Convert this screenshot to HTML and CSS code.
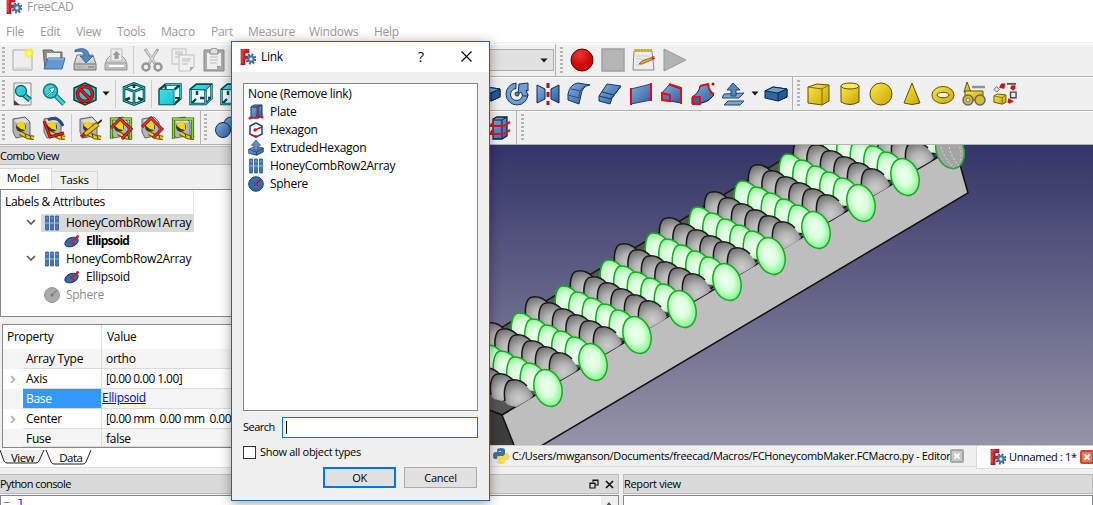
FILE: index.html
```html
<!DOCTYPE html>
<html lang="en">
<head>
<meta charset="utf-8">
<title>FreeCAD</title>
<link rel="stylesheet" href="styles.css">
</head>
<body>
<svg class="defs" width="0" height="0">
<defs>
<linearGradient id="blue" x1="0" y1="0" x2="1" y2="1"><stop offset="0" stop-color="#82b0e2"/><stop offset="1" stop-color="#2c5c9f"/></linearGradient>
<linearGradient id="yellow" x1="0" y1="0" x2="1" y2="1"><stop offset="0" stop-color="#fbe84f"/><stop offset="1" stop-color="#caa400"/></linearGradient>
<linearGradient id="metal" x1="0" y1="0" x2="0" y2="1"><stop offset="0" stop-color="#e8e8e8"/><stop offset="1" stop-color="#b4b4b4"/></linearGradient>
<linearGradient id="cyan" x1="0" y1="0" x2="1" y2="1"><stop offset="0" stop-color="#45dfe6"/><stop offset="1" stop-color="#16c2cd"/></linearGradient>
<radialGradient id="red" cx=".4" cy=".25"><stop offset="0" stop-color="#f03434"/><stop offset="1" stop-color="#c90808"/></radialGradient>
<radialGradient id="glow" cx=".5" cy=".5"><stop offset="0" stop-color="#fffde0"/><stop offset=".45" stop-color="#fff02a"/><stop offset="1" stop-color="#fff02a" stop-opacity="0"/></radialGradient>
<linearGradient id="sky" x1="0" y1="0" x2="0" y2="1"><stop offset="0" stop-color="#343467"/><stop offset="1" stop-color="#9494a9"/></linearGradient>
<radialGradient id="greenBall" cx=".48" cy=".45" r=".56"><stop offset="0" stop-color="#efffef"/><stop offset=".5" stop-color="#d9ffdb"/><stop offset="1" stop-color="#7cf588"/></radialGradient>
<radialGradient id="greenTop" cx=".42" cy=".55" r=".6"><stop offset="0" stop-color="#efffef"/><stop offset=".5" stop-color="#d4fdd6"/><stop offset="1" stop-color="#80f08a"/></radialGradient>
<radialGradient id="greyBall" cx=".5" cy=".7" r=".75"><stop offset="0" stop-color="#cdcdcd"/><stop offset=".4" stop-color="#b4b4b4"/><stop offset="1" stop-color="#6a6a6a"/></radialGradient>
<symbol id="app" viewBox="0 0 16 16"><path d="M1 0h8v4H5v3h3v3H5v6H1z" fill="#d01c24" stroke="#7d1016" stroke-width=".6"/><path d="M5 1H2v13" fill="none" stroke="#f45a60"/><circle cx="11" cy="10" r="4.300" fill="none" stroke="#3d6193" stroke-width="2.600" stroke-dasharray="1.800 1.570"/><circle cx="11" cy="10" r="2.700" fill="#dce7f5" stroke="#4670a8" stroke-width="2"/></symbol>
<symbol id="new" viewBox="0 0 24 24"><path d="M2 2h19v20H2z" fill="#eee" stroke="#aaa"/><path d="M4 20h15" stroke="#ccc"/><circle cx="18" cy="5" r="6" fill="url(#glow)"/></symbol>
<symbol id="open" viewBox="0 0 24 24"><path d="M1 2h9l2 2h8v7H5L3 21z" fill="#8d8d8d" stroke="#666"/><path d="M5 5h13v8H5z" fill="#eee"/><path d="M6 10h17l-3 11H2z" fill="#6599d4" stroke="#3e70ae"/><path d="M6 11h16" stroke="#a8c8eb"/></symbol>
<symbol id="save" viewBox="0 0 24 24"><path d="M4 7h16l3 9v6H1v-6z" fill="url(#metal)" stroke="#777"/><path d="M2 16h20M15 19h6" stroke="#777"/><path d="M4 19h6" stroke="#888" stroke-dasharray="1 1"/><path d="M2 2c8-3 14-1 14 6h4l-7 7-6-7h4c0-4-3-6-9-4z" fill="#5587c7" stroke="#315c94" stroke-width=".8"/></symbol>
<symbol id="print" viewBox="0 0 24 24"><path d="M3 11l3-3h12l3 3 2 5v6H1v-6z" fill="url(#metal)" stroke="#999"/><path d="M7 1h11v12H7z" fill="#eee" stroke="#bbb"/><path d="M12.500 3l4 4h-2v4h-4V7h-2z" fill="#999"/><path d="M2 15h20" stroke="#999"/><path d="M5 18h15" stroke="#fafafa" stroke-width="2"/></symbol>
<symbol id="cut" viewBox="0 0 24 24"><path d="M5 1l11 16M18 1L8 17" stroke="#aaa" stroke-width="3"/><path d="M6 2l9 13M17 3L9 15" stroke="#eee"/><circle cx="6" cy="19" r="3.500" fill="none" stroke="#999" stroke-width="2.500"/><circle cx="18" cy="19" r="3.500" fill="none" stroke="#999" stroke-width="2.500"/></symbol>
<symbol id="copy" viewBox="0 0 24 24"><g fill="#f0f0f0" stroke="#c0c0c0"><path d="M1 1h14v15H1z"/><path d="M8 7h15v12l-4 4H8z"/></g><path d="M4 4h8M4 6h8M4 9h4M11 11h9M11 13h8M11 16h6" stroke="#bbb"/><path d="M19 23v-4h4z" fill="#aaa"/></symbol>
<symbol id="paste" viewBox="0 0 24 24"><path d="M2 2h20v21H2z" fill="#aaa" stroke="#888"/><path d="M5 5h14v13l-4 3H5z" fill="#efefef"/><path d="M8 2q4-4 8 0v4H8z" fill="#ddd" stroke="#888"/><path d="M8 9h8M8 12h8M8 15h7" stroke="#bbb"/><path d="M15 21v-3h4z" fill="#999"/></symbol>
<symbol id="fit" viewBox="0 0 24 24"><path d="M3 1h17v22H3z" fill="#f2f2f2" stroke="#8b8b8b"/><path d="M3 18l6 5H3z" fill="#444"/><path d="M13 13l6 5" stroke="#085d66" stroke-width="5"/><path d="M13 13l6 5" stroke="#38cbd6" stroke-width="2.500"/><circle cx="10" cy="9" r="5.500" fill="url(#cyan)" stroke="#085d66" stroke-width="1.300"/></symbol>
<symbol id="fitsel" viewBox="0 0 24 24"><path d="M14 14l8 8" stroke="#0c6b74" stroke-width="5"/><path d="M13 13l9 9" stroke="#3ad3dc" stroke-width="3"/><circle cx="8.500" cy="9" r="7" fill="url(#cyan)" stroke="#16747c" stroke-width="1.500"/><path d="M5 13l4-4-2-2 6-2-2 6-1-1-4 4" fill="#e5ffff" stroke="#085d66" stroke-width=".6"/></symbol>
<symbol id="style" viewBox="0 0 24 24"><path d="M12 1l11 5v12l-11 5L1 18V6z" fill="#20cad5" stroke="#063f46" stroke-width="1.500"/><circle cx="12" cy="12" r="7.500" fill="none" stroke="#7d0505" stroke-width="3.600"/><circle cx="12" cy="12" r="7.500" fill="none" stroke="#e31919" stroke-width="2"/><path d="M7 7l10 10" stroke="#7d0505" stroke-width="3.600"/><path d="M7 7l10 10" stroke="#e31919" stroke-width="2"/></symbol>
<symbol id="iso" viewBox="0 0 24 24"><path d="M12 1.500l10 4v13l-10 4-10-4v-13z" fill="#e9f7f7"/><g fill="none"><path d="M12 1.500l10 4v13l-10 4-10-4v-13zM2 5.500l10 4 10-4M12 9.500v13M2 18.500l6-2.500m14 2.500l-6-2.500M12 2v4" stroke="#053e43" stroke-width="2.600"/><path d="M12 1.500l10 4v13l-10 4-10-4v-13zM2 5.500l10 4 10-4M12 9.500v13" stroke="#2cc4cd"/></g></symbol>
<symbol id="front" viewBox="0 0 24 24"><path d="M1.500 7.500l6-5h15v14l-6 5.500h-15zM16.500 7.500l6-5" fill="#dff" stroke="#06484e" stroke-width="2.400"/><path d="M7.500 2.500v5M17 16h5" stroke="#06484e" stroke-width="2"/><path d="M1.500 7.500h14.500v15H1.500z" fill="url(#cyan)" stroke="#0a7d86"/><path d="M7.500 2.500h15v14" fill="none" stroke="#2cc4cd"/></symbol>
<symbol id="top" viewBox="0 0 24 24"><path d="M1.500 7.500l6-5h15v14l-6 5.500h-15zM16.500 7.500v15M2 22l5-5m4-1h4m4 0h3M8 9v4" fill="#eefafa" stroke="#06484e" stroke-width="2.400"/><path d="M1.500 8v14h15V8m6-5v14l-6 5" fill="none" stroke="#2cc4cd"/><path d="M1.500 7.500l6-5h15l-6 5.500z" fill="url(#cyan)" stroke="#06484e"/></symbol>
<symbol id="tape" viewBox="0 0 24 24"><path d="M2 3l12-2 5 5v13L5 22l-3-6z" fill="#b5b5b5" stroke="#666"/><path d="M3 4l11-2 4 4-11 2z" fill="#ddd"/><circle cx="10" cy="11" r="5" fill="#3a3a3a"/><path d="M6 10a4 4 0 0 1 8-1v5l-4-1z" fill="#f4d414"/><path d="M9 17l8 4 6 1" stroke="#6c5500" stroke-width="4.500" fill="none"/><path d="M9 17l8 4 6 1" stroke="#eccc15" stroke-width="2.500" fill="none"/><path d="M14 18l1 3M19 20l1 3" stroke="#333"/></symbol>
<symbol id="tapeAngle" viewBox="0 0 24 24"><use href="#tape"/><path d="M2 5l6 16 14-4" fill="none" stroke="#7d0000" stroke-width="3"/><path d="M2 5l6 16 14-4" fill="none" stroke="#e42424" stroke-width="1.500"/><path d="M6 4q10-5 15 6" fill="none" stroke="#234f87" stroke-width="3"/></symbol>
<symbol id="tapePen" viewBox="0 0 24 24"><use href="#tape"/><path d="M6 19L20 8" stroke="#705900" stroke-width="5"/><path d="M6 19L20 8" stroke="#edc11e" stroke-width="3"/><path d="M3 21l4-3" stroke="#b92222" stroke-width="4"/><path d="M19 8l5-4" stroke="#333" stroke-width="2"/></symbol>
<symbol id="tapeGreen" viewBox="0 0 24 24"><use href="#tape"/><path d="M2.500 23V3h19v20" fill="none" stroke="#275e06" stroke-width="3.200"/><path d="M2.500 23V3h19v20" fill="none" stroke="#86d32d" stroke-width="1.800"/></symbol>
<symbol id="tapeRed" viewBox="0 0 24 24"><use href="#tape"/><path d="M2 11l9-9 11 11-9 9" fill="none" stroke="#780909" stroke-width="3"/><path d="M2 11l9-9 11 11-9 9" fill="none" stroke="#ef3232" stroke-width="1.600"/></symbol>
<symbol id="tapeAll" viewBox="0 0 24 24"><use href="#tapeGreen"/><path d="M2 12l9-9 11 10-9 10" fill="none" stroke="#780909" stroke-width="3"/><path d="M2 12l9-9 11 10-9 10" fill="none" stroke="#ef3232" stroke-width="1.600"/></symbol>
<symbol id="balls" viewBox="0 0 24 24"><circle cx="18" cy="8" r="7" fill="url(#blue)" stroke="#132d52"/><circle cx="10" cy="14" r="7.500" fill="url(#blue)" stroke="#132d52"/></symbol>
<symbol id="record" viewBox="0 0 24 24"><circle cx="12" cy="12" r="11" fill="url(#red)" stroke="#5e0000"/></symbol>
<symbol id="stop" viewBox="0 0 24 24"><path d="M1 1h22v22H1z" fill="#b5b5b5" stroke="#a0a0a0" stroke-width="1.500"/></symbol>
<symbol id="macro" viewBox="0 0 24 24"><path d="M2 3h18l2 19H1z" fill="#eee" stroke="#888"/><path d="M2 1h18v3H2z" fill="#dcc62f"/><path d="M4 1v3M7 1v3M10 1v3M13 1v3M16 1v3M19 1v3" stroke="#a8962a"/><path d="M4 8h14M4 11h12M4 14h6M4 17h5" stroke="#ccc"/><path d="M7 16l3-3L21 9l1 2-12 5z" fill="#efa83e" stroke="#81511b" stroke-width=".8"/><path d="M19 9l3-1 1 3-3 1z" fill="#bf4442"/></symbol>
<symbol id="play" viewBox="0 0 24 24"><path d="M1 1l22 11L1 23z" fill="#b3b3b3" stroke="#999"/></symbol>
<symbol id="box" viewBox="0 0 24 24"><path d="M1 9l8-4 14 2v8l-9 4-13-3z" fill="#3465a4" stroke="#0c2548"/><path d="M1 9l8-4 14 2-9 4z" fill="#729fcf" stroke="#0c2548"/><path d="M14 11v8l9-4V7z" fill="#2b5896" stroke="#0c2548"/></symbol>
<symbol id="extrude" viewBox="0 0 24 24"><path d="M1 14l10-5 12 3v6l-10 5-12-3z" fill="url(#blue)" stroke="#132d52"/><path d="M1 14l12 4 10-6M13 18v5" fill="none" stroke="#132d52"/><path d="M9 15V8H5l7-8 7 8h-4v7z" fill="#6491c5" stroke="#344f73"/></symbol>
<symbol id="revolve" viewBox="0 0 24 24"><path d="M11 1A11 11 0 1 0 23 12h-5.500A6 6 0 1 1 11 6.500z" fill="#6c9dd4" stroke="#1c3557"/><path d="M14 2l9-1v8l-2-1 2 6h-5l-2-4-3 2z" fill="#6c9dd4" stroke="#1c3557"/><circle cx="12" cy="12" r="2" fill="#5a87b9" stroke="#1c3557"/></symbol>
<symbol id="mirror" viewBox="0 0 24 24"><path d="M1 3l8 4v10l-8 4zM23 3l-8 4v10l8 4z" fill="url(#blue)" stroke="#102744"/><path d="M12 1v22" stroke="#b70f18" stroke-width="3" stroke-dasharray="5 4"/></symbol>
<symbol id="fillet" viewBox="0 0 24 24"><path d="M1 12Q3 2 11 1l12 2q-8 1-9 10l-2 9-11-4z" fill="url(#blue)" stroke="#17355e"/><path d="M1 13l11 3Q12 7 18 4M4 7l10 2" fill="none" stroke="#274f85"/></symbol>
<symbol id="chamfer" viewBox="0 0 24 24"><path d="M1 14L9 2l14 2-9 12-2 6-11-3z" fill="url(#blue)" stroke="#17355e"/><path d="M1 14l12 3L23 4M4 10l12 3" fill="none" stroke="#17355e"/></symbol>
<symbol id="ruled" viewBox="0 0 24 24"><path d="M2 7l20-5v16L2 22z" fill="url(#blue)" stroke="#29466c"/><path d="M2 6v17M22 1v18" stroke="#d90c18" stroke-width="2"/></symbol>
<symbol id="loft" viewBox="0 0 24 24"><path d="M2 11L9 3l12 4v14L10 19l-8-1z" fill="url(#blue)" stroke="#17355e"/><path d="M9 2l12 4v16" fill="none" stroke="#df101b" stroke-width="2"/><path d="M2 11l8 2v6l-8-1z" fill="#4b7cba" stroke="#df101b" stroke-width="2"/></symbol>
<symbol id="sweep" viewBox="0 0 24 24"><path d="M1 15Q8 11 9 4l8-2q1 9 6 11-5 7-12 8L1 22z" fill="url(#blue)" stroke="#111f36"/><path d="M9 4l8-2q1 8 6 10" fill="none" stroke="#df101b" stroke-width="2"/><path d="M2 15h7v7H2z" fill="#3d629a" stroke="#df101b" stroke-width="2"/><circle cx="22" cy="2" r="1.500" fill="#b00"/></symbol>
<symbol id="offset" viewBox="0 0 24 24"><path d="M2 12l20-1-5 5H0zM6 19h16l-4 4H2z" fill="#79a5d8" stroke="#24466f"/><path d="M9 14V8H5l6-7 7 7h-4v6z" fill="#5786bd" stroke="#24466f"/></symbol>
<symbol id="section" viewBox="0 0 24 24"><path d="M5 3l4-2h10v19l-5 3H5z" fill="url(#blue)" stroke="#10233e" stroke-width="1.300"/><path d="M5 4h9v19M14 4l5-3" fill="none" stroke="#10233e"/><path d="M5 7l-3 3h14l6-4M5 14l-3 4h14l6-4" fill="none" stroke="#d71722" stroke-width="2.200"/></symbol>
<symbol id="ycube" viewBox="0 0 24 24"><path d="M1 5l9-3 12 1v16l-7 4-14-2z" fill="url(#yellow)" stroke="#5f4f00"/><path d="M1 5l14 2v16M15 7l7-4" fill="none" stroke="#806b00"/></symbol>
<symbol id="ycyl" viewBox="0 0 24 24"><path d="M3 4v16q9 5 18 0V4" fill="url(#yellow)" stroke="#5f4f00"/><ellipse cx="12" cy="4" rx="9" ry="3" fill="#fbe957" stroke="#5f4f00"/></symbol>
<symbol id="ysphere" viewBox="0 0 24 24"><circle cx="12" cy="12" r="11" fill="url(#yellow)" stroke="#5f4f00"/></symbol>
<symbol id="ycone" viewBox="0 0 24 24"><path d="M12 1l8 20q-8 3-16 0z" fill="url(#yellow)" stroke="#5f4f00"/></symbol>
<symbol id="torus" viewBox="0 0 24 24"><path fill-rule="evenodd" d="M1 13a11 8.500 0 0 1 22 0a11 8.500 0 0 1-22 0m5 0a6 2.700 0 0 0 12 0a6 2.700 0 0 0-12 0" fill="url(#yellow)" stroke="#665300"/></symbol>
<symbol id="prims" viewBox="0 0 24 24"><path d="M5 0l4 10H2z" fill="url(#yellow)" stroke="#665300"/><path d="M3 9h18v9H3z" fill="url(#yellow)" stroke="#665300"/><path d="M10 5h13" stroke="#8a9292" stroke-width="2.500"/><g fill="#d8bd28" stroke="#666" stroke-width="1.500"><circle cx="6" cy="18" r="5"/><circle cx="18" cy="18" r="5"/></g><circle cx="6" cy="18" r="2" fill="#ddd" stroke="#777"/></symbol>
<symbol id="shape" viewBox="0 0 26 24"><path d="M1 14l4-2 9 1v8l-4 2-9-2z" fill="url(#yellow)" stroke="#665300"/><path d="M1 14l9 2v7M10 16l4-3" fill="none" stroke="#806b00"/><path d="M1 7l3-3 3 3-3 3z" fill="#ddd" stroke="#666"/><path d="M15 1h10" stroke="#555" stroke-width="2"/><path d="M19 10h6v6h-6z" fill="#eee" stroke="#445" stroke-width="1.500"/><path d="M7 5l2-4 4 0-1 5zM20 3h4v3l-2 2-3-2zM16 21l1-4 5 3-4 2z" fill="#df1111" stroke="#750000" stroke-width=".5"/></symbol>
<symbol id="plate" viewBox="0 0 16 16"><path d="M3 3l3-2h8v11l-4 2H3z" fill="url(#blue)" stroke="#173457"/><path d="M3 3h7v11M10 3l4-2" fill="none" stroke="#173457"/><path d="M1 14h9l5-2M9 4v10" fill="none" stroke="#c91420"/><circle cx="2" cy="14" r="1.500" fill="#d21a25"/><circle cx="14" cy="13" r="1.500" fill="#d21a25"/></symbol>
<symbol id="hexagon" viewBox="0 0 16 16"><path d="M8 1l6 3v8l-6 3-6-3V4z" fill="#fff" stroke="#244d83" stroke-width="1.600"/><path d="M8 15l-6-3M7 8l7-3" fill="none" stroke="#c41926" stroke-width="1.500"/><circle cx="7" cy="8" r="1.700" fill="#c41926"/><circle cx="8" cy="14.500" r="1.300" fill="#c41926"/></symbol>
<symbol id="array" viewBox="0 0 16 16"><path d="M1.500 1h3v14h-3zM6.500 1h3v14h-3zM11.500 1h3v14h-3z" fill="#3b78be" stroke="#315d92" stroke-width=".8"/><path d="M0 8h16" stroke="#a9bfda"/><path d="M2 3h2M7 3h2M12 3h2" stroke="#7da8d8"/></symbol>
<symbol id="sphere" viewBox="0 0 16 16"><circle cx="8" cy="8" r="7.300" fill="#376aab" stroke="#193d6e"/><path d="M8 8l5-5" stroke="#b91722" stroke-width="1.500"/><circle cx="8" cy="8" r="1.500" fill="#c11723"/></symbol>
<symbol id="greySphere" viewBox="0 0 16 16"><circle cx="8" cy="8" r="7.500" fill="#aaa" stroke="#999"/><path d="M8 8l5-5" stroke="#888" stroke-width="1.500"/><circle cx="8" cy="8" r="1.500" fill="#777"/></symbol>
<symbol id="ellipsoid" viewBox="0 0 16 16"><ellipse cx="7.500" cy="9" rx="7" ry="4.300" transform="rotate(-24 7.500 9)" fill="#376aab" stroke="#163968"/><path d="M7 9l7-6M7 9l4 3" stroke="#cb1722" stroke-width="1.300"/><circle cx="7" cy="9" r="1.300" fill="#d41c26"/><circle cx="13.500" cy="3.500" r="1.500" fill="#c41c26"/></symbol>
<symbol id="python" viewBox="0 0 16 16"><path d="M4 4V2q0-2 4-2t4 2v4q0 2-2 2H6q-2 0-2 3H2q-2 0-2-3.500T3 4h5V3z" fill="#3873a4"/><path d="M12 12v2q0 2-4 2t-4-2v-4q0-2 2-2h4q2 0 2-3h2q2 0 2 3.500T13 12H8v1z" fill="#ffd653"/></symbol>
<symbol id="arrow" viewBox="0 0 8 5"><path d="M.5.5h7L4 4.500z" fill="#111"/></symbol>
<symbol id="closeTab" viewBox="0 0 14 14"><rect x="1" y="1" width="12" height="12" rx="1" fill="#c8c8c8" stroke="#a7a7a7" stroke-width="2"/><path d="M4.500 4.500l5 5m0-5l-5 5" stroke="#fff" stroke-width="2"/></symbol>
<symbol id="closeRed" viewBox="0 0 14 14"><rect x="1" y="1" width="12" height="12" rx="1" fill="#e27b64" stroke="#cc4a2c" stroke-width="2"/><path d="M4.500 4.500l5 5m0-5l-5 5" stroke="#fff" stroke-width="2"/></symbol>
<g id="greenDome"><path d="M-14 0C-15-10-12-19-6-19C4-19 13-7 14 3L8 10L-8 8Z" fill="url(#greenTop)"/><path d="M-13 5C-15-6-13-19-6-19C0-19 5-16 9-10" fill="none" stroke="#18aa25" stroke-width="1.500"/></g>
<g id="greyDome"><path d="M-12 9C-14-4-11-13-6-13C5-15 13-4 16 3L13 6L-1 14L-9 12Z" fill="url(#greyBall)"/><path d="M-12 8C-14-4-11-13-5-13C2-14 6-11 10-7" fill="none" stroke="#171717" stroke-width="1.500"/></g>
<g id="greenRow"><use href="#greenDome" x="-68" y="-30"/><use href="#greenDome" x="-54.500" y="-24"/><use href="#greenDome" x="-41" y="-18"/><use href="#greenDome" x="-27.500" y="-12"/><use href="#greenDome" x="-14" y="-6"/><ellipse rx="13.600" ry="18.900" transform="rotate(-18)" fill="url(#greenBall)" stroke="#19aa25" stroke-width="1.500"/></g>
<g id="greyRow"><use href="#greyDome" x="-68" y="-30"/><use href="#greyDome" x="-54.500" y="-24"/><use href="#greyDome" x="-41" y="-18"/><use href="#greyDome" x="-27.500" y="-12"/><use href="#greyDome" x="-14" y="-6"/><use href="#greyDome"/></g>
</defs>
</svg>

<div class="app">
  <header class="titlebar"><svg class="i16"><use href="#app"/></svg><span>FreeCAD</span></header>
  <nav class="menubar"><span class="m1">File</span><span class="m2">Edit</span><span class="m3">View</span><span class="m4">Tools</span><span class="m5">Macro</span><span class="m6">Part</span><span class="m7">Measure</span><span class="m8">Windows</span><span>Help</span></nav>

  <div class="toolbar">
    <div class="half"><i class="grip"></i><b><svg><use href="#new"/></svg></b><b><svg><use href="#open"/></svg></b><b><svg><use href="#save"/></svg></b><b><svg><use href="#print"/></svg></b><i class="sep"></i><b><svg><use href="#cut"/></svg></b><b><svg><use href="#copy"/></svg></b><b><svg><use href="#paste"/></svg></b></div>
    <div class="rest"><div class="combo"><svg class="arrow"><use href="#arrow"/></svg></div><i class="edge"></i><i class="grip"></i><b><svg><use href="#record"/></svg></b><b><svg><use href="#stop"/></svg></b><b><svg><use href="#macro"/></svg></b><b><svg><use href="#play"/></svg></b></div>
  </div>
  <div class="toolbar">
    <div class="half"><i class="grip"></i><b><svg><use href="#fit"/></svg></b><b><svg><use href="#fitsel"/></svg></b><b><svg><use href="#style"/></svg></b><svg class="arrow"><use href="#arrow"/></svg><i class="sep wide"></i><b><svg><use href="#iso"/></svg></b><i class="sep"></i><b><svg><use href="#front"/></svg></b><b><svg><use href="#top"/></svg></b><b><svg><use href="#top"/></svg></b></div>
    <div class="rest"><b class="partial"><svg><use href="#box"/></svg></b><b><svg><use href="#revolve"/></svg></b><b><svg><use href="#mirror"/></svg></b><b><svg><use href="#fillet"/></svg></b><b><svg><use href="#chamfer"/></svg></b><b><svg><use href="#ruled"/></svg></b><b><svg><use href="#loft"/></svg></b><b><svg><use href="#sweep"/></svg></b><b><svg><use href="#offset"/></svg></b><svg class="arrow"><use href="#arrow"/></svg><b><svg><use href="#box"/></svg></b><i class="edge"></i><i class="grip"></i><b><svg><use href="#ycube"/></svg></b><b><svg><use href="#ycyl"/></svg></b><b><svg><use href="#ysphere"/></svg></b><b><svg><use href="#ycone"/></svg></b><b><svg><use href="#torus"/></svg></b><b><svg><use href="#prims"/></svg></b><b><svg><use href="#shape"/></svg></b></div>
  </div>
  <div class="toolbar">
    <div class="half"><i class="grip"></i><b><svg><use href="#tape"/></svg></b><b><svg><use href="#tapeAngle"/></svg></b><i class="sep"></i><b><svg><use href="#tapePen"/></svg></b><b><svg><use href="#tapeAll"/></svg></b><b><svg><use href="#tapeRed"/></svg></b><b><svg><use href="#tapeGreen"/></svg></b><i class="edge"></i><i class="grip"></i><b><svg><use href="#balls"/></svg></b></div>
    <div class="rest"><b class="section"><svg><use href="#section"/></svg></b><i class="edge"></i><i class="grip"></i></div>
  </div>

  <main class="work">
    <aside class="side">
      <h2 class="dock">Combo View</h2>
      <div class="tabs"><span class="tab on">Model</span><span class="tab">Tasks</span></div>
      <div class="tree">
        <div class="thead">Labels &amp; Attributes</div>
        <div class="node"><svg class="chev" viewBox="0 0 10 6"><path d="M1 1l4 4 4-4"/></svg><span class="label picked"><svg class="i16"><use href="#array"/></svg><em>HoneyCombRow1Array</em></span></div>
        <div class="node child"><svg class="i16"><use href="#ellipsoid"/></svg><em class="strong">Ellipsoid</em></div>
        <div class="node"><svg class="chev" viewBox="0 0 10 6"><path d="M1 1l4 4 4-4"/></svg><span class="label"><svg class="i16"><use href="#array"/></svg><em>HoneyCombRow2Array</em></span></div>
        <div class="node child"><svg class="i16"><use href="#ellipsoid"/></svg><em>Ellipsoid</em></div>
        <div class="node leaf"><svg class="i16"><use href="#greySphere"/></svg><em>Sphere</em></div>
      </div>
      <div class="props">
        <div class="prow phead"><span class="key">Property</span><span class="val">Value</span></div>
        <div class="prow alt"><i></i><span class="key">Array Type</span><span class="val">ortho</span></div>
        <div class="prow"><i><svg class="rchev" viewBox="0 0 6 9"><path d="M1 1l3.500 3.500L1 8"/></svg></i><span class="key">Axis</span><span class="val num">[0.00 0.00 1.00]</span></div>
        <div class="prow alt"><i></i><span class="key current">Base</span><span class="val link">Ellipsoid</span></div>
        <div class="prow"><i><svg class="rchev" viewBox="0 0 6 9"><path d="M1 1l3.500 3.500L1 8"/></svg></i><span class="key">Center</span><span class="val num">[0.00 mm&nbsp; 0.00 mm&nbsp; 0.00 mm]</span></div>
        <div class="prow alt last"><i></i><span class="key">Fuse</span><span class="val">false</span></div>
      </div>
      <div class="vtabs">
        <svg class="vshape" width="96" height="18"><path d="M0 0l4 11q1 2 3 2h29q2 0 3-2l5-11" fill="#f0f0f0" stroke="#222"/><path d="M46 0l5 12q1 2 3 2h29q2 0 3-2l5-12" fill="#fff" stroke="#222"/></svg>
        <span>View</span><span>Data</span>
      </div>
    </aside>
    <section class="stage">
      <svg class="scene" viewBox="489 145 604 300" width="604" height="300">
        <rect x="489" y="145" width="604" height="300" fill="url(#sky)"/>
        <path d="M489 335L822 136h140L502 415l-13-5z" fill="#555" stroke="#161616" stroke-width="1.500"/>
        <path d="M502 415L955 147l13 46L541 445h-27z" fill="#bebebe"/>
        <path d="M489 410l13 5 12 31h-25z" fill="#3d3d3d"/>
        <path d="M489 410l13 5 12 30M502 415L955 147l13 46L541 446" fill="none" stroke="#111" stroke-width="1.500"/>
        <use href="#greyRow" x="963" y="129"/><use href="#greenRow" x="950" y="150"/>
        <ellipse cx="950" cy="150" rx="13.600" ry="18.900" transform="rotate(-18 950 150)" fill="#a4a4a4" stroke="#26a631" stroke-width="1.300"/>
        <path d="M940 143q2 13 14 25M949 143q0 12 10 23M958 143q5 10 2 20" fill="none" stroke="#baf2bd" stroke-dasharray="2 2"/>
        <use href="#greyRow" x="918" y="155"/><use href="#greenRow" x="905" y="177"/>
        <use href="#greyRow" x="874" y="182"/><use href="#greenRow" x="861" y="203"/>
        <use href="#greyRow" x="829" y="208"/><use href="#greenRow" x="816" y="230"/>
        <use href="#greyRow" x="785" y="235"/><use href="#greenRow" x="771" y="256"/>
        <use href="#greyRow" x="740" y="261"/><use href="#greenRow" x="727" y="282"/>
        <use href="#greyRow" x="695" y="287"/><use href="#greenRow" x="682" y="309"/>
        <use href="#greyRow" x="651" y="314"/><use href="#greenRow" x="637" y="335"/>
        <use href="#greyRow" x="606" y="340"/><use href="#greenRow" x="593" y="362"/>
        <use href="#greyRow" x="562" y="366"/><use href="#greenRow" x="548" y="388"/>
        <use href="#greyRow" x="517" y="393"/>
      </svg>
      <div class="mdi"><div class="doc"><svg class="i16"><use href="#python"/></svg><span class="path">C:/Users/mwganson/Documents/freecad/Macros/FCHoneycombMaker.FCMacro.py - Editor</span><svg class="i14"><use href="#closeTab"/></svg></div><div class="doc active"><svg class="i16"><use href="#app"/></svg><span class="unnamed">Unnamed : 1*</span><svg class="i14"><use href="#closeRed"/></svg></div></div>
    </section>
  </main>
  <footer class="bottom">
    <section class="console"><h2 class="dock"><span>Python console</span><svg width="30" height="12" viewBox="0 0 30 12"><path d="M5 4V2h5v5H7M2 5h5v5H2zM2 5.500h5M5 2.500h5" fill="none" stroke="#111" stroke-width="1.200"/><path d="M18 3l7 7m0-7l-7 7" stroke="#111" stroke-width="1.700"/></svg></h2><div class="pane"><code><span>=</span> ]</code><div class="scroll"><svg viewBox="0 0 8 5" width="8" height="5"><path d="M0 5l4-5 4 5z" fill="#555"/></svg></div></div></section>
    <section class="report"><h2 class="dock">Report view</h2><div class="pane"></div></section>
  </footer>
</div>

<div class="dialog" role="dialog">
  <div class="dtitle"><svg class="i16"><use href="#app"/></svg><span>Link</span><span class="help">?</span><svg class="x" viewBox="0 0 11 11"><path d="M.5.5l10 10m0-10l-10 10"/></svg></div>
  <div class="dbody">
    <ul class="list"><li class="none">None (Remove link)</li><li><svg class="i16"><use href="#plate"/></svg>Plate</li><li><svg class="i16"><use href="#hexagon"/></svg>Hexagon</li><li><svg class="i16"><use href="#extrude"/></svg>ExtrudedHexagon</li><li><svg class="i16"><use href="#array"/></svg>HoneyCombRow2Array</li><li><svg class="i16"><use href="#sphere"/></svg>Sphere</li></ul>
    <label class="search"><span>Search</span><span class="field"></span></label>
    <label class="check"><i></i><span>Show all object types</span></label>
    <div class="buttons"><span class="btn ok">OK</span><span class="btn">Cancel</span></div>
  </div>
</div>
</body>
</html>
```
FILE: styles.css
```css
* { box-sizing: border-box; }
body { margin: 0; width: 1093px; height: 505px; overflow: hidden; position: relative; font: 12px/18px "Open Sans", "Noto Sans", sans-serif; letter-spacing: -.28px; color: #000; background: #f0f0f0; }
.defs { position: absolute; }
svg { display: block; flex: none; }
i, em { font-style: normal; }
.i16 { width: 16px; height: 16px; }
.i14 { width: 14px; height: 14px; }
.app { width: 1093px; height: 505px; display: flex; flex-direction: column; }

.titlebar { height: 22px; padding-left: 6px; display: flex; gap: 5px; background: #fff; color: #999; line-height: 14px; flex: none; }
.titlebar .i16 { margin-top: -2px; }
.menubar { height: 22px; display: flex; padding-left: 6px; background: #fff; color: #999; line-height: 20px; border-bottom: 2px solid #f3f3f3; flex: none; }
.m1 { width: 34px; } .m2 { width: 36px; } .m3 { width: 41px; } .m4 { width: 44px; } .m5 { width: 50px; } .m6 { width: 37px; } .m7 { width: 61px; } .m8 { width: 65px; }

.toolbar { height: 34px; flex: none; display: flex; border-bottom: 1px solid #b2b2b2; box-shadow: inset 0 1px #fff; background: #f0f0f0; }
.toolbar:nth-of-type(1) { height: 33px; }
.half { width: 489px; display: flex; align-items: center; flex: none; }
.rest { display: flex; align-items: center; flex: 1; overflow: hidden; }
.toolbar b { width: 31px; flex: none; display: flex; justify-content: center; }
.toolbar b svg { width: 24px; height: 24px; }
.grip { width: 3px; height: 27px; margin: 0 2px; flex: none; background: repeating-linear-gradient(#b5b5b5 0 2px, transparent 2px 4px); }
.sep { width: 1px; height: 28px; background: #ccc; margin: 0 2px; flex: none; }
.sep.wide { margin: 0 2px 0 4px; }
.edge { width: 1px; align-self: stretch; background: #b4b4b4; margin: 0 1px 0 2px; flex: none; }
.toolbar .arrow { width: 8px; height: 5px; margin: 0 1px 0 2px; }
.combo { width: 65px; height: 22px; background: #e1e1e1; border: 1px solid #adadad; display: flex; align-items: center; justify-content: flex-end; padding-right: 4px; }
.rest .edge { margin: 0 1px; }
.rest .grip { margin: 0 3px; }
.toolbar .partial { width: 12px; justify-content: flex-end; }
.toolbar .section { width: 26px; justify-content: flex-start; }
.section svg { margin-left: -1px; }

.work { height: 323px; display: flex; flex: none; }
.side { width: 489px; padding-top: 1px; display: flex; flex-direction: column; }
.dock { margin: 0; height: 19px; font-size: 11px; font-weight: 400; line-height: 17px; background: #dadada; border: 1px solid #bcbcbc; border-left: 0; letter-spacing: -.5px; flex: none; }
.tabs { height: 24px; padding-top: 3px; display: flex; align-items: flex-end; flex: none; }
.tab { height: 18px; width: 46px; text-align: center; border: 1px solid #d9d9d9; border-left: 0; border-bottom: 0; line-height: 16px; font-size: 11.500px; }
.tab.on { width: 52px; height: 21px; padding-right: 5px; background: #fff; line-height: 17px; }
.tree { height: 128px; border: 1px solid #828790; background: #fff; flex: none; }
.thead { width: 193px; height: 24px; line-height: 24px; padding-left: 4px; border-right: 1px solid #e5e5e5; letter-spacing: -.33px; }
.node { height: 18px; display: flex; align-items: center; padding-left: 25px; }
.node em { line-height: 18px; }
.chev { width: 10px; height: 6px; margin-right: 5px; margin-top: -3px; }
.chev path, .rchev path { fill: none; stroke: #555; stroke-width: 1.600; }
.label { width: 153px; height: 18px; padding-left: 3px; display: flex; align-items: center; gap: 6px; }
.picked { background: #d9d9d9; }
.child { padding-left: 63px; gap: 6px; }
.leaf { padding-left: 43px; gap: 6px; color: #8c8c8c; }
.strong { font-weight: 700; letter-spacing: -.75px; }
.props { height: 124px; margin: 7px 0 0 2px; border: 1px solid #828790; background: #fff; flex: none; overflow: hidden; }
.prow { display: flex; height: 20px; line-height: 20px; }
.prow > i { width: 20px; display: flex; align-items: center; padding-left: 7px; }
.rchev { width: 6px; height: 9px; }
.rchev path { stroke: #aaa; }
.key { width: 79px; padding-left: 3px; border-right: 1px solid #dcdcdc; border-bottom: 1px solid #dcdcdc; flex: none; }
.val { flex: 1; padding-left: 4px; border-bottom: 1px solid #dcdcdc; white-space: nowrap; }
.num { letter-spacing: -.58px; }
.alt { background: #f5f5f5; }
.phead { height: 24px; line-height: 24px; }
.phead .key { width: 99px; padding-left: 4px; border-bottom: 0; }
.phead .val { border-bottom: 0; padding-left: 5px; }
.last { height: 18px; }
.current { background: #3399ff; color: #fff; }
.link { color: #0000ee; text-decoration: underline; padding-left: 0; line-height: 18px; }
.vtabs { position: relative; height: 20px; background: #fff; border-bottom: 1px solid #dcdcdc; display: flex; gap: 25px; padding-left: 11px; line-height: 19px; flex: none; font-size: 11.500px; letter-spacing: -.5px; }
.vshape { position: absolute; left: 0; top: 2px; }
.vtabs span { position: relative; }

.stage { flex: 1; min-width: 0; display: flex; flex-direction: column; }
.mdi { display: flex; height: 23px; border-top: 1px solid #d0d0d0; }
.doc { width: 487px; height: 21px; padding-left: 4px; display: flex; align-items: center; gap: 3px; border-bottom: 1px solid #ddd; flex: none; white-space: nowrap; font-size: 11px; letter-spacing: -.33px; }
.path { width: 435px; }
.unnamed { width: 70px; }
.active { width: 117px; height: 23px; background: #fff; padding-left: 13px; border-left: 1px solid #ddd; }

.bottom { flex: 1; min-height: 0; display: flex; gap: 4px; padding-top: 6px; }
.console { width: 619px; }
.bottom .dock { height: 20px; line-height: 18px; border-left: 1px solid #bcbcbc; letter-spacing: -.35px; }
.console .dock { display: flex; justify-content: space-between; align-items: center; padding-right: 0; border-left: 0; letter-spacing: -.55px; }
.report { flex: 1; }
.pane { height: 20px; margin-top: 1px; border: 1px solid #828790; background: #fff; display: flex; justify-content: space-between; }
.pane code { font: 12px/18px "Liberation Mono", monospace; color: #22f; padding-left: 2px; }
.pane code span { color: #888; }
.scroll { width: 17px; background: #f0f0f0; padding: 6px 0 0 4px; }

.dialog { position: absolute; left: 231px; top: 41px; width: 259px; height: 460px; border: 1px solid #1968a2; background: #f0f0f0; box-shadow: 0 2px 11px rgba(0,0,0,.38); display: flex; flex-direction: column; }
.dtitle { height: 30px; padding-left: 8px; display: flex; align-items: center; background: #fff; flex: none; }
.dtitle span { margin-left: 5px; width: 157px; }
.dtitle .help { width: 43px; margin: 0; font-size: 14px; }
.x { width: 11px; height: 11px; margin-top: -1px; }
.x path { stroke: #000; stroke-width: 1.100; }
.dbody { padding: 11px 11px 0; }
.list { list-style: none; margin: 0; padding: 1px 4px; height: 328px; border: 1px solid #828790; background: #fff; }
.list li { height: 18px; display: flex; align-items: center; gap: 6px; }
.search { display: flex; height: 21px; margin-top: 6px; line-height: 20px; }
.search span:first-child { width: 39px; font-size: 11px; letter-spacing: -.5px; }
.field { flex: 1; border: 1px solid #0078d7; background: #fff; padding: 3px; }
.field::before { content: ""; display: block; width: 1px; height: 13px; background: #000; }
.check { display: flex; align-items: center; gap: 4px; margin-top: 5px; font-size: 11px; letter-spacing: -.3px; }
.check i { width: 13px; height: 13px; background: #fff; border: 1px solid #333; }
.buttons { display: flex; justify-content: flex-end; gap: 8px; margin: 6px 1px 0 0; font-size: 11px; }
.btn { width: 73px; height: 21px; border: 1px solid #adadad; background: #e1e1e1; text-align: center; line-height: 20px; }
.ok { border: 2px solid #0078d7; line-height: 18px; }
```
